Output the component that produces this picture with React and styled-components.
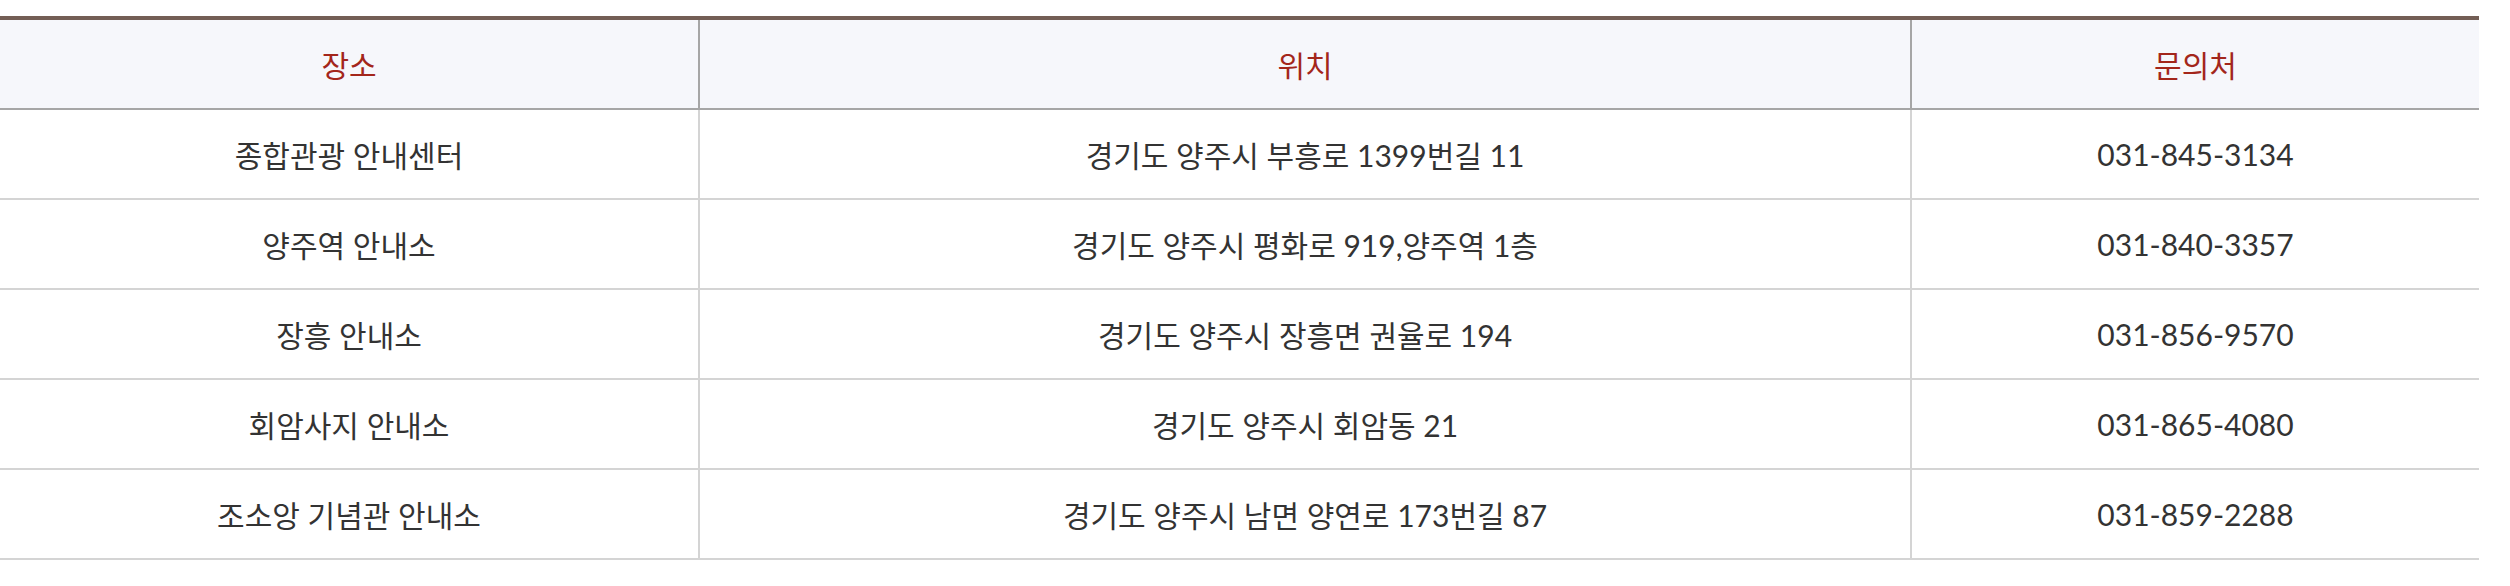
import React from "react";
import styled, { createGlobalStyle } from "styled-components";

const GlobalStyle = createGlobalStyle`
  html, body {
    margin: 0;
    padding: 0;
    background: #ffffff;
  }
  body {
    font-family: Lato, "Noto Sans CJK KR", sans-serif;
  }
`;

const Page = styled.div`
  padding-top: 16px;
`;

const Table = styled.div`
  width: 2479px;
  border-top: 4px solid #735e55;
`;

const columns = "698px 1212px 569px";

const Row = styled.div`
  display: grid;
  grid-template-columns: ${columns};
  background: ${props => (props.head ? "#f6f7fb" : "#ffffff")};
  border-bottom: 2px solid ${props => (props.head ? "#a6a6a6" : "#d4d4d4")};
`;

const Cell = styled.div`
  box-sizing: border-box;
  height: 88px;
  display: flex;
  align-items: center;
  justify-content: center;
  font-size: 30px;
  color: ${props => (props.head ? "#a3261b" : "#333333")};
  border-left: 2px solid ${props => (props.head ? "#a6a6a6" : "#d4d4d4")};
  &:first-child {
    border-left: none;
  }
`;

const headers = ["장소", "위치", "문의처"];

const rows = [
  ["종합관광 안내센터", "경기도 양주시 부흥로 1399번길 11", "031-845-3134"],
  ["양주역 안내소", "경기도 양주시 평화로 919,양주역 1층", "031-840-3357"],
  ["장흥 안내소", "경기도 양주시 장흥면 권율로 194", "031-856-9570"],
  ["회암사지 안내소", "경기도 양주시 회암동 21", "031-865-4080"],
  ["조소앙 기념관 안내소", "경기도 양주시 남면 양연로 173번길 87", "031-859-2288"]
];

export default function App() {
  return (
    <Page>
      <GlobalStyle />
      <Table>
        <Row head>
          {headers.map(h => (
            <Cell head key={h}>
              {h}
            </Cell>
          ))}
        </Row>
        {rows.map(r => (
          <Row key={r[0]}>
            {r.map((c, i) => (
              <Cell key={i}>{c}</Cell>
            ))}
          </Row>
        ))}
      </Table>
    </Page>
  );
}
